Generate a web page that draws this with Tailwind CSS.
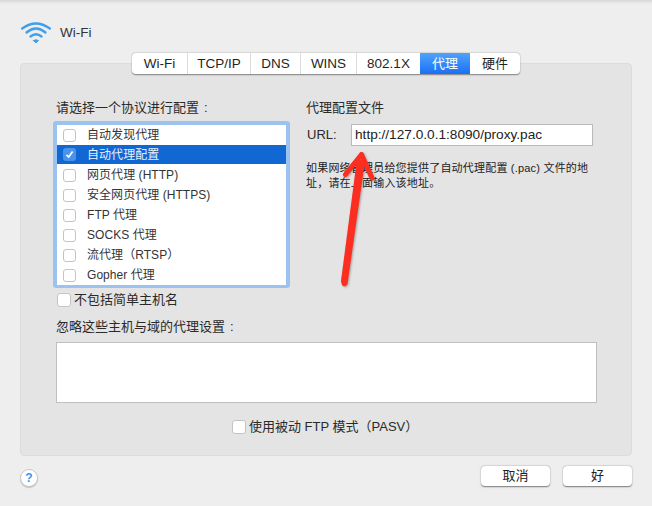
<!DOCTYPE html>
<html lang="zh-CN">
<head>
<meta charset="UTF-8">
<title>Wi-Fi</title>
<script src="https://cdn.jsdelivr.net/npm/@tailwindcss/browser@4"></script>
</head>
<body class="bg-[#eeeeee] font-['Liberation_Sans','Noto_Sans_CJK_SC',sans-serif] text-[13px] text-[#2a2a2a] overflow-hidden">
<div class="relative w-[652px] h-[506px] overflow-hidden">
  <!-- window top shadow -->
  <div class="h-[4px] bg-gradient-to-b from-[#d6d6d6] to-[#eeeeee]"></div>

  <!-- header -->
  <div class="flex items-center h-[38px] mt-[10px] pl-[21px]">
    <svg width="30" height="22" viewBox="0 0 30 22" fill="none" stroke="#3f9fea" stroke-linecap="round">
      <path d="M1.2 6.5Q15 -3.5 28.8 6.5" stroke-width="2.3"/>
      <path d="M5.5 10.5Q15 2.5 24.5 10.5" stroke-width="2.3"/>
      <path d="M9.5 14.5Q15 10 20.5 14.5" stroke-width="2.3"/>
      <path d="M12.5 18.5L15 21L17.5 18.5Q15 17 12.5 18.5Z" fill="#3f9fea" stroke-width="1"/>
    </svg>
    <span class="ml-[9px] text-[13.5px] text-[#333333]">Wi-Fi</span>
  </div>

  <!-- main panel -->
  <div class="relative mt-[11px] ml-[20px] w-[612px] h-[393px] bg-[#e4e4e4] border border-[#dcdcdc] rounded-[4px] pl-[35px] pt-[35px]">
    <!-- tabs -->
    <div class="absolute left-[111px] top-[-11px] flex h-[21px] bg-white rounded-[4px] shadow-[0_0.5px_1.5px_rgba(0,0,0,0.45)] overflow-hidden text-[13.5px] text-[#1f1f1f]">
      <div class="w-[56px] pt-px flex items-center justify-center border-r border-[#dcdcdc]">Wi-Fi</div>
      <div class="w-[63px] pt-px flex items-center justify-center border-r border-[#dcdcdc]">TCP/IP</div>
      <div class="w-[50px] pt-px flex items-center justify-center border-r border-[#dcdcdc]">DNS</div>
      <div class="w-[56px] pt-px flex items-center justify-center border-r border-[#dcdcdc]">WINS</div>
      <div class="w-[63px] pt-px flex items-center justify-center">802.1X</div>
      <div class="w-[50px] flex items-center justify-center text-[13px] text-white bg-gradient-to-b from-[#4fa3fb] to-[#1a6ff5]">代理</div>
      <div class="w-[50px] flex items-center justify-center text-[13px]">硬件</div>
    </div>

    <div class="flex">
      <!-- protocol list -->
      <div class="w-[250px]">
        <div class="h-[18px] leading-[18px]">请选择一个协议进行配置<span class="ml-[5px]">:</span></div>
        <div class="mt-[4px] -ml-[3px] w-[237px] h-[167px] rounded-[3px] bg-[#9cc3ef] p-[4px]">
          <div class="bg-white h-[160px] text-[12px] tracking-[0.05px] text-[#333333] flex flex-col">
            <div class="h-[20px] flex items-center pl-[6px]"><span class="w-[13px] h-[13px] rounded-[3px] border border-[#c4c4c4] bg-white"></span><span class="ml-[11px]">自动发现代理</span></div>
            <div class="h-[19px] mb-px flex items-center pl-[6px] bg-[#1268d3] text-[#e8f0fb]">
              <span class="w-[13px] h-[13px] rounded-[3px] bg-[#4a93ea] flex items-center justify-center">
                <svg width="9" height="9" viewBox="0 0 9 9" fill="none" stroke="white" stroke-width="1.7"><path d="M1.5 4.8L3.7 7L7.6 1.4"/></svg>
              </span>
              <span class="ml-[11px]">自动代理配置</span>
            </div>
            <div class="h-[20px] flex items-center pl-[6px]"><span class="w-[13px] h-[13px] rounded-[3px] border border-[#c4c4c4] bg-white"></span><span class="ml-[11px]">网页代理 (HTTP)</span></div>
            <div class="h-[20px] flex items-center pl-[6px]"><span class="w-[13px] h-[13px] rounded-[3px] border border-[#c4c4c4] bg-white"></span><span class="ml-[11px]">安全网页代理 (HTTPS)</span></div>
            <div class="h-[20px] flex items-center pl-[6px]"><span class="w-[13px] h-[13px] rounded-[3px] border border-[#c4c4c4] bg-white"></span><span class="ml-[11px]">FTP 代理</span></div>
            <div class="h-[20px] flex items-center pl-[6px]"><span class="w-[13px] h-[13px] rounded-[3px] border border-[#c4c4c4] bg-white"></span><span class="ml-[11px]">SOCKS 代理</span></div>
            <div class="h-[20px] flex items-center pl-[6px]"><span class="w-[13px] h-[13px] rounded-[3px] border border-[#c4c4c4] bg-white"></span><span class="ml-[11px]">流代理（RTSP）</span></div>
            <div class="h-[20px] flex items-center pl-[6px]"><span class="w-[13px] h-[13px] rounded-[3px] border border-[#c4c4c4] bg-white"></span><span class="ml-[11px]">Gopher 代理</span></div>
          </div>
        </div>
      </div>

      <!-- proxy config file -->
      <div class="w-[290px]">
        <div class="h-[18px] leading-[18px]">代理配置文件</div>
        <div class="flex items-center mt-[7px] h-[22px]">
          <span class="w-[45px] pl-px">URL:</span>
          <div class="w-[242px] h-[22px] bg-white border border-[#b9b9b9] pl-[3px] leading-[20px] text-[#222222] text-[13.65px]">http://127.0.0.1:8090/proxy.pac</div>
        </div>
        <p class="mt-[15px] w-[290px] text-[11px] tracking-[0.2px] leading-[15px] text-[#222222]">如果网络管理员给您提供了自动代理配置 (.pac) 文件的地址，请在上面输入该地址。</p>
      </div>
    </div>

    <!-- bypass simple hosts -->
    <div class="flex items-center h-[16px] mt-[4px] ml-px">
      <span class="w-[14px] h-[14px] rounded-[3px] bg-white border border-[#c4c4c4]"></span>
      <span class="ml-[3px]">不包括简单主机名</span>
    </div>

    <div class="mt-[10px] h-[18px] leading-[18px]">忽略这些主机与域的代理设置<span class="ml-[5px]">:</span></div>
    <div class="mt-[6px] w-[541px] h-[61px] bg-white border border-[#bfbfbf]"></div>

    <!-- passive ftp -->
    <div class="flex items-center h-[16px] mt-[16px] ml-[176px]">
      <span class="w-[14px] h-[14px] rounded-[3px] bg-white border border-[#c4c4c4]"></span>
      <span class="ml-[3px]">使用被动 FTP 模式（PASV）</span>
    </div>
  </div>

  <!-- footer -->
  <div class="flex items-center mt-[9px] pl-[20px] w-[632px]">
    <div class="w-[18px] h-[18px] mt-[4px] rounded-full bg-white border border-[#c9c9c9] shadow-[0_1px_1px_rgba(0,0,0,0.2)] flex items-center justify-center text-[12px] font-bold text-[#3d92f0]">?</div>
    <button class="ml-auto w-[69px] h-[20px] rounded-[4px] bg-white shadow-[0_0.5px_1.5px_rgba(0,0,0,0.5)] text-[#222222]">取消</button>
    <button class="ml-[13px] w-[69px] h-[20px] rounded-[4px] bg-white shadow-[0_0.5px_1.5px_rgba(0,0,0,0.5)] text-[#222222]">好</button>
  </div>

  <!-- red annotation arrow -->
  <svg class="absolute left-[330px] top-[145px] drop-shadow-[1px_1px_1px_rgba(0,0,0,0.3)]" width="60" height="150" viewBox="0 0 60 150">
    <path d="M15.5 29.5L31.5 9.5L42 33" fill="none" stroke="#fb2e20" stroke-width="5" stroke-linecap="round" stroke-linejoin="round"/>
    <path d="M27 14L35 16L17.5 139Q15 143 12 140L11 136Z" fill="#fb2e20"/>
  </svg>
</div>
</body>
</html>
